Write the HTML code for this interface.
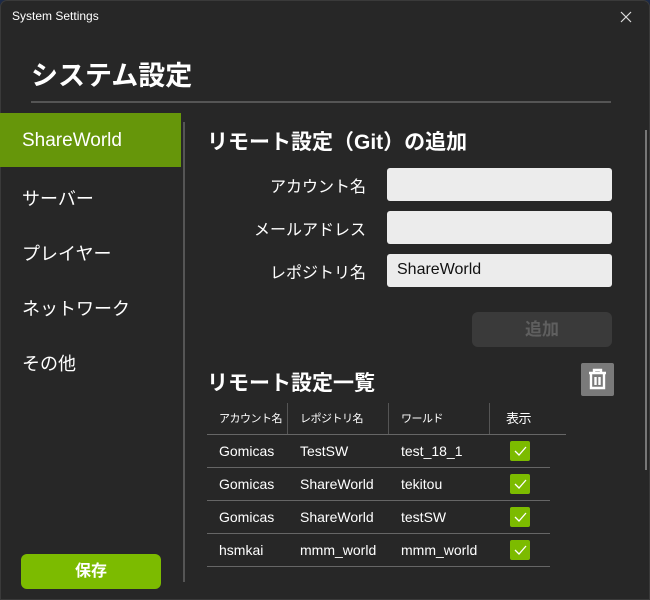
<!DOCTYPE html>
<html><head><meta charset="utf-8"><style>
*{margin:0;padding:0;box-sizing:border-box}
body{width:650px;height:600px;background:#1c2a48;font-family:"Liberation Sans","Noto Sans CJK JP",sans-serif;color:#fff;overflow:hidden;position:relative}
.win{position:absolute;left:0;top:0;width:650px;height:600px;background:#272727;border-radius:7px 7px 0 0;box-shadow:inset 0 0 0 1px #3a3a3a}
.a{position:absolute}
.lbl{position:absolute;right:284px;font-size:16px;text-align:right;white-space:nowrap}
.inp{position:absolute;left:387px;width:225px;height:33px;background:#ececec;border-radius:3px;color:#111;font-size:16px;padding:7px 10px}
.nav{position:absolute;left:22px;font-size:18px;white-space:nowrap}
.th{position:absolute;top:403px;height:32px;font-size:11px;line-height:32px;border-right:1px solid #555;white-space:nowrap;letter-spacing:-0.5px}
.td{position:absolute;font-size:14px}
.hr{position:absolute;left:207px;width:343px;height:1px;background:#666}
.cb{position:absolute;left:510px;width:20px;height:20px;background:#7cbb00;border-radius:2px}
</style></head><body><div class="win">
<div class="a" style="left:12px;top:9px;font-size:12px">System Settings</div>
<svg class="a" style="left:620px;top:11px" width="12" height="12"><path d="M1 1L11 11M11 1L1 11" stroke="#ddd" stroke-width="1.2"/></svg>
<div class="a" style="left:31px;top:54px;font-size:27px;font-weight:bold">システム設定</div>
<div class="a" style="left:31px;top:101px;width:580px;height:2px;background:#555"></div>
<div class="a" style="left:0;top:113px;width:181px;height:54px;background:#66960a"></div>
<div class="nav" style="top:130px;font-size:19px">ShareWorld</div>
<div class="nav" style="top:185px">サーバー</div>
<div class="nav" style="top:240px">プレイヤー</div>
<div class="nav" style="top:295px">ネットワーク</div>
<div class="nav" style="top:350px">その他</div>
<div class="a" style="left:183px;top:122px;width:2px;height:460px;background:#555"></div>
<div class="a" style="left:21px;top:554px;width:140px;height:35px;background:#7cbb00;border-radius:6px;text-align:center;font-size:16px;font-weight:bold;line-height:35px">保存</div>
<div class="a" style="left:645px;top:130px;width:2px;height:340px;background:#777"></div>
<div class="a" style="left:207px;top:126px;font-size:21px;font-weight:bold">リモート設定（Git）の追加</div>
<div class="lbl" style="top:173px">アカウント名</div>
<div class="lbl" style="top:216px">メールアドレス</div>
<div class="lbl" style="top:259px">レポジトリ名</div>
<div class="inp" style="top:168px"></div>
<div class="inp" style="top:211px"></div>
<div class="inp" style="top:254px">ShareWorld</div>
<div class="a" style="left:472px;top:312px;width:140px;height:35px;background:#3a3a3a;border-radius:6px;text-align:center;line-height:35px;font-size:17px;font-weight:bold;color:#5f5f5f">追加</div>
<div class="a" style="left:207px;top:367px;font-size:21px;font-weight:bold">リモート設定一覧</div>
<div class="a" style="left:581px;top:363px;width:33px;height:33px;background:#7a7a7a;border-radius:2px">
<svg width="33" height="33" viewBox="0 0 33 33" fill="none" stroke="#fff" stroke-width="2.4"><path d="M8 10h17M13 10V7h7v3M10 10v15h13V10M14.5 14v8M18.5 14v8"/></svg></div>
<div class="th" style="left:207px;width:81px;padding-left:12px">アカウント名</div>
<div class="th" style="left:288px;width:101px;padding-left:12px">レポジトリ名</div>
<div class="th" style="left:389px;width:101px;padding-left:12px">ワールド</div>
<div class="th" style="left:490px;width:76px;padding-left:16px;border:none;font-size:13px">表示</div>
<div class="hr" style="top:434px;width:359px"></div>
<div class="hr" style="top:467px"></div><div class="hr" style="top:500px"></div><div class="hr" style="top:533px"></div><div class="hr" style="top:566px"></div>
<div class="td" style="left:219px;top:443px">Gomicas</div><div class="td" style="left:300px;top:443px">TestSW</div><div class="td" style="left:401px;top:443px">test_18_1</div><div class="cb" style="top:441px"></div>
<div class="td" style="left:219px;top:476px">Gomicas</div><div class="td" style="left:300px;top:476px">ShareWorld</div><div class="td" style="left:401px;top:476px">tekitou</div><div class="cb" style="top:474px"></div>
<div class="td" style="left:219px;top:509px">Gomicas</div><div class="td" style="left:300px;top:509px">ShareWorld</div><div class="td" style="left:401px;top:509px">testSW</div><div class="cb" style="top:507px"></div>
<div class="td" style="left:219px;top:542px">hsmkai</div><div class="td" style="left:300px;top:542px">mmm_world</div><div class="td" style="left:401px;top:542px">mmm_world</div><div class="cb" style="top:540px"></div>
<svg class="a" style="left:510px;top:441px" width="20" height="120"><g fill="none" stroke="#fff" stroke-width="1.3"><path d="M5 10l4 4 7-8"/><path d="M5 43l4 4 7-8"/><path d="M5 76l4 4 7-8"/><path d="M5 109l4 4 7-8"/></g></svg>
</div></body></html>
